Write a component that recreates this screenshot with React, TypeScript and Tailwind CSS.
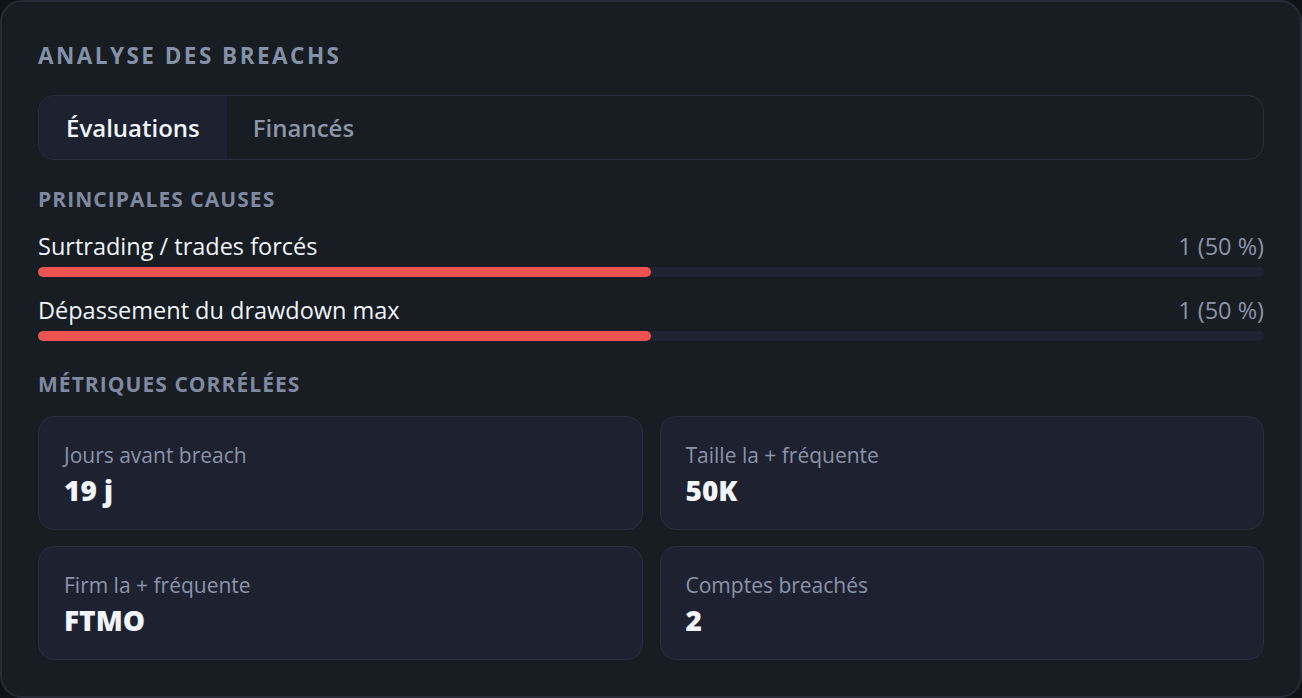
import React from "react";

interface Cause {
  label: string;
  count: number;
  pct: number;
}

interface Metric {
  label: string;
  value: string;
}

const causes: Cause[] = [
  { label: "Surtrading / trades forcés", count: 1, pct: 50 },
  { label: "Dépassement du drawdown max", count: 1, pct: 50 },
];

const metrics: Metric[] = [
  { label: "Jours avant breach", value: "19 j" },
  { label: "Taille la + fréquente", value: "50K" },
  { label: "Firm la + fréquente", value: "FTMO" },
  { label: "Comptes breachés", value: "2" },
];

export default function App() {
  return (
    <div
      className="min-h-screen bg-[#0f1217]"
      style={{ fontFamily: '"Open Sans", "Noto Sans", sans-serif' }}
    >
      <div className="h-[698px] rounded-[22px] border-2 border-[#252c38] bg-[#181c23] px-[36px] pt-[40px]">
        <h2 className="text-[22.5px] font-bold uppercase leading-[28px] tracking-[0.11em] text-[#8491a6]">
          Analyse des breachs
        </h2>

        <div className="mt-[25px] flex h-[65px] overflow-hidden rounded-[16px] border border-[#28303d]">
          <button className="bg-[#1e2230] px-[27px] text-[24px] font-semibold text-[#f1f4f8]">
            Évaluations
          </button>
          <button className="px-[26px] text-[24px] font-semibold text-[#8b95a6]">
            Financés
          </button>
        </div>

        <h3 className="mt-[26px] text-[21px] font-bold uppercase leading-[26px] tracking-[0.05em] text-[#7f8aa0]">
          Principales causes
        </h3>

        <div className="mt-[18px] flex flex-col gap-[17px]">
          {causes.map((c) => (
            <div key={c.label}>
              <div className="flex items-center justify-between text-[23.5px] leading-[32px]">
                <span className="text-[#f1f4f8]">{c.label}</span>
                <span className="text-[#8b95a6]">
                  {c.count} ({c.pct} %)
                </span>
              </div>
              <div className="mt-[5px] h-[10px] rounded-full bg-[#1f2432]">
                <div
                  className="h-full rounded-full bg-[#ef5350]"
                  style={{ width: `${c.pct}%` }}
                />
              </div>
            </div>
          ))}
        </div>

        <h3 className="mt-[30px] text-[21px] font-bold uppercase leading-[26px] tracking-[0.05em] text-[#7f8aa0]">
          Métriques corrélées
        </h3>

        <div className="mt-[19px] grid grid-cols-2 gap-[16px] gap-x-[17px]">
          {metrics.map((m) => (
            <div
              key={m.label}
              className="h-[114px] rounded-[16px] border border-[#272f3c] bg-[#1e2230] px-[25px] pt-[24px]"
            >
              <div className="text-[21px] leading-[28px] text-[#8a94a8]">
                {m.label}
              </div>
              <div className="mt-[4px] text-[28px] font-black leading-[34px] text-[#f1f4f8]">
                {m.value}
              </div>
            </div>
          ))}
        </div>
      </div>
    </div>
  );
}
